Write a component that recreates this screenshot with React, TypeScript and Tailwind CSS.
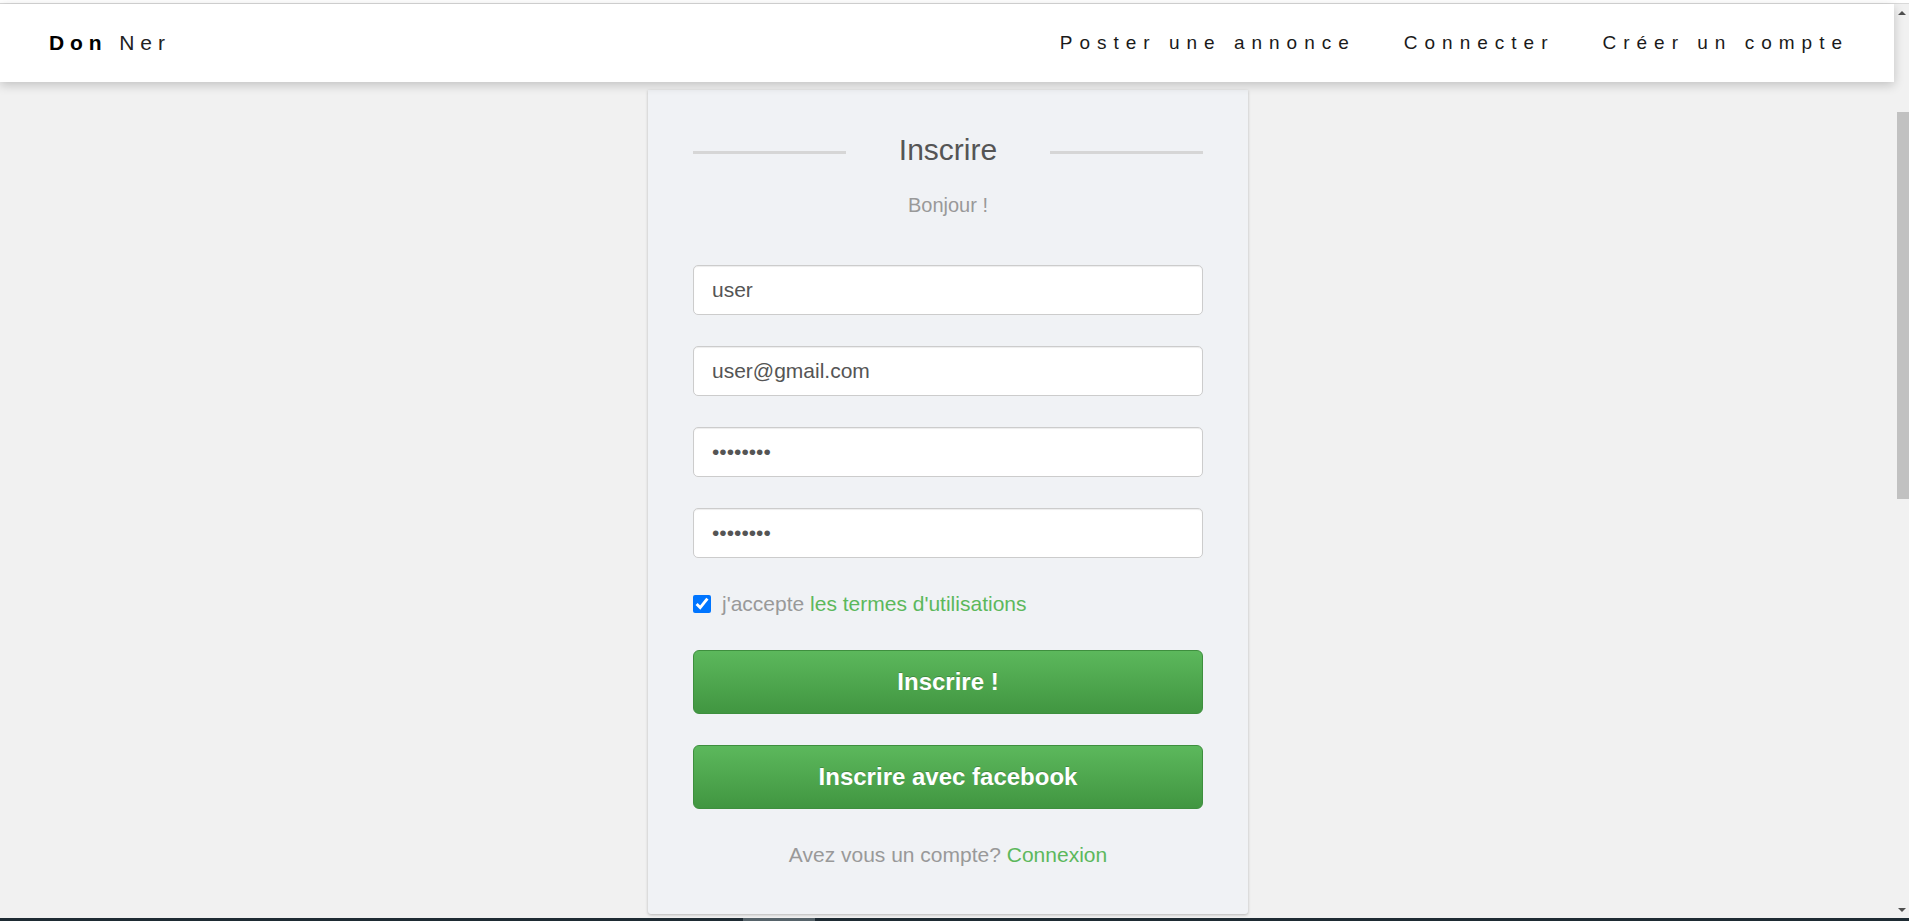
import { useState } from "react";

const navLinks = ["Poster une annonce", "Connecter", "Créer un compte"];

const Header = () => {
  return (
    <header className="relative z-10 h-[78px] shrink-0 bg-white shadow-[0_3px_10px_rgba(0,0,0,0.2)] flex items-center justify-between pl-[49px] pr-[45px]">
      <a href="#" className="text-[21px] tracking-[5.9px] text-black">
        <span className="font-bold">Don</span> <span className="text-[#222]">Ner</span>
      </a>
      <nav className="flex items-center gap-[48px] text-[19px] tracking-[7px] text-[#1a1a1a]">
        {navLinks.map((link) => (
          <a key={link} href="#">
            {link}
          </a>
        ))}
      </nav>
    </header>
  );
};

const InscrireCard = () => {
  const [formData, setFormData] = useState({
    nom: "user",
    email: "user@gmail.com",
    password: "password",
    confirm: "password",
  });
  const [accepte, setAccepte] = useState(true);

  const inputClass =
    "w-full h-[50px] border border-[#ccc] rounded-[5px] bg-white px-[18px] text-[21px] text-[#555] shadow-[inset_0_1px_1px_rgba(0,0,0,0.075)] outline-none";

  const buttonClass =
    "w-full h-[64px] rounded-[6px] border border-[#3e8f3e] bg-gradient-to-b from-[#5cb85c] to-[#419641] text-white text-[24px] font-bold [text-shadow:0_-1px_0_rgba(0,0,0,0.2)]";

  return (
    <div className="w-[600px] bg-[#f0f2f5] px-[45px] pt-[42px] pb-[47px] rounded-b-[3px] shadow-[0_1px_3px_rgba(0,0,0,0.25)]">
      {/* Titre */}
      <div className="flex items-center">
        <div className="w-[30%] h-[3px] mt-[4px] bg-[#d6d6d6]" />
        <h1 className="flex-1 text-center text-[30px] leading-[36px] text-[#555]">Inscrire</h1>
        <div className="w-[30%] h-[3px] mt-[4px] bg-[#d6d6d6]" />
      </div>
      <p className="mt-[25px] text-center text-[20px] leading-[24px] text-[#999]">Bonjour !</p>

      <form className="mt-[48px]" onSubmit={(e) => e.preventDefault()}>
        <div className="flex flex-col gap-[31px]">
          <input
            type="text"
            value={formData.nom}
            onChange={(e) => setFormData({ ...formData, nom: e.target.value })}
            className={inputClass}
          />
          <input
            type="email"
            value={formData.email}
            onChange={(e) => setFormData({ ...formData, email: e.target.value })}
            className={inputClass}
          />
          <input
            type="password"
            value={formData.password}
            onChange={(e) => setFormData({ ...formData, password: e.target.value })}
            className={inputClass}
          />
          <input
            type="password"
            value={formData.confirm}
            onChange={(e) => setFormData({ ...formData, confirm: e.target.value })}
            className={inputClass}
          />
        </div>

        <label className="mt-[34px] flex items-center gap-[11px] text-[21px] leading-[24px] text-[#999]">
          <input
            type="checkbox"
            checked={accepte}
            onChange={(e) => setAccepte(e.target.checked)}
            className="m-0 w-[18px] h-[18px] accent-[#0075ff]"
          />
          <span>
            j'accepte <a href="#" className="text-[#5cb85c]">les termes d'utilisations</a>
          </span>
        </label>

        <button type="submit" className={`mt-[34px] ${buttonClass}`}>
          Inscrire !
        </button>
        <button type="button" className={`mt-[31px] ${buttonClass}`}>
          Inscrire avec facebook
        </button>
      </form>

      <p className="mt-[34px] text-center text-[21px] leading-[24px] text-[#999]">
        Avez vous un compte? <a href="#" className="text-[#5cb85c]">Connexion</a>
      </p>
    </div>
  );
};

const Scrollbar = () => {
  return (
    <div className="w-[15px] shrink-0 bg-[#f1f1f1] flex flex-col">
      <div className="h-[17px] flex items-center justify-center">
        <div className="w-0 h-0 border-l-[4px] border-r-[4px] border-b-[4px] border-l-transparent border-r-transparent border-b-[#505050]" />
      </div>
      <div className="mt-[91px] ml-[3px] w-[12px] h-[387px] bg-[#c1c1c1]" />
      <div className="mt-auto h-[17px] flex items-center justify-center">
        <div className="w-0 h-0 border-l-[4px] border-r-[4px] border-t-[4px] border-l-transparent border-r-transparent border-t-[#505050]" />
      </div>
    </div>
  );
};

const App = () => {
  return (
    <div className="h-[921px] w-full overflow-hidden flex flex-col bg-[#f1f1f1] font-['Liberation_Sans',Arial,sans-serif]">
      <div className="h-[3px] shrink-0 bg-white" />
      <div className="h-px shrink-0 bg-[#d9d9d9]" />
      <div className="flex flex-1 min-h-0">
        <div className="flex-1 min-w-0 flex flex-col">
          <Header />
          <main className="flex justify-center pt-[8px] pl-[2px]">
            <InscrireCard />
          </main>
        </div>
        <Scrollbar />
      </div>
      <div className="h-[3px] shrink-0 bg-[#1e2b33] flex">
        <div className="ml-[743px] w-[72px] bg-[#56636a]" />
      </div>
    </div>
  );
};

export default App;
